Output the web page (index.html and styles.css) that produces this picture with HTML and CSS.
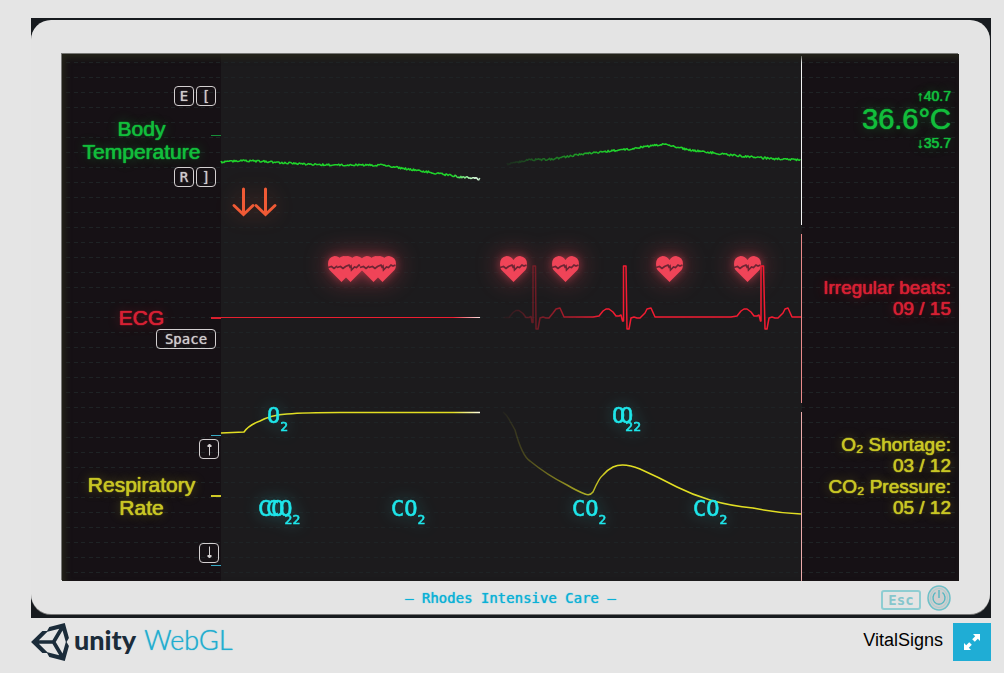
FILE: index.html
```html
<!DOCTYPE html>
<html lang="en">
<head>
<meta charset="utf-8">
<title>VitalSigns</title>
<link rel="stylesheet" href="styles.css">
</head>
<body>
<main class="game">
  <div class="monitor">
    <section class="screen">
      <div class="labels">
        <div class="channel temp">
          <div class="keys"><kbd>E</kbd><kbd>[</kbd></div>
          <h2>Body<br>Temperature</h2>
          <div class="keys"><kbd>R</kbd><kbd>]</kbd></div>
        </div>
        <div class="channel ecg">
          <h2>ECG</h2>
          <div class="keys"><kbd class="wide">Space</kbd></div>
        </div>
        <div class="channel resp">
          <div class="keys"><kbd><svg viewBox="0 0 18 18"><path d="M9.500 15.500V4M7.500 6.500h4M8.500 4.500h2M7.500 5.500h4" /></svg></kbd></div>
          <h2>Respiratory<br>Rate</h2>
          <div class="keys"><kbd><svg viewBox="0 0 18 18"><path d="M9.500 2.500V14M7.500 11.500h4M8.500 13.500h2M7.500 12.500h4" /></svg></kbd></div>
        </div>
      </div>

      <svg class="plot" viewBox="0 0 581 527" role="img" aria-label="Vital sign traces">
        <defs>
          <linearGradient id="gTemp" gradientUnits="userSpaceOnUse" x1="0" y1="0" x2="580" y2="0">
            <stop offset="0" stop-color="#1fd42b"/><stop offset=".4" stop-color="#1fd42b"/><stop offset=".44" stop-color="#e4ffe6"/>
            <stop offset=".48" stop-color="#1fd42b" stop-opacity="0"/><stop offset=".55" stop-color="#1fd42b" stop-opacity=".4"/><stop offset=".68" stop-color="#1fd42b"/>
          </linearGradient>
          <linearGradient id="gEcg" gradientUnits="userSpaceOnUse" x1="0" y1="0" x2="580" y2="0">
            <stop offset="0" stop-color="#e6202f"/><stop offset=".4" stop-color="#f01d30"/><stop offset=".446" stop-color="#ffe0e0"/>
            <stop offset=".48" stop-color="#f31b31" stop-opacity="0"/><stop offset=".54" stop-color="#f31b31" stop-opacity=".35"/><stop offset=".66" stop-color="#f31b31"/>
          </linearGradient>
          <linearGradient id="gResp" gradientUnits="userSpaceOnUse" x1="0" y1="0" x2="580" y2="0">
            <stop offset="0" stop-color="#e2de22"/><stop offset=".4" stop-color="#e2de22"/><stop offset=".446" stop-color="#fffde0"/>
            <stop offset=".48" stop-color="#e2de22" stop-opacity="0"/><stop offset=".55" stop-color="#e2de22" stop-opacity=".35"/><stop offset=".68" stop-color="#e2de22"/>
          </linearGradient>
          <symbol id="heart" viewBox="0 0 27 26" overflow="visible">
            <path fill="#f04458" d="M13.500 26L1.500 14Q0 12 0 8Q0 1 6.500 0Q11 0 13.500 4Q16 0 20 0Q27 1 27 8Q27 12 25.500 14Z"/>
            <path fill="none" stroke="#6d2533" stroke-width="1.700" d="M0 11.500L3.500 10.500L6 12.500L8.500 10.500L12 9L13 11L14 10L14.500 14L17.500 11L19.500 11.500L22 9L24 10L26.500 9"/>
          </symbol>
        </defs>

        <g class="ticks">
          <path stroke="#168d38" d="M-10 81.500H0"/>
          <path stroke="#d8202e" stroke-width="2" d="M-10 264H0"/>
          <path stroke="#37a9c4" d="M-10 381.500H0M-10 511.500H0"/>
          <path stroke="#cfc926" stroke-width="2" d="M-10 442H0"/>
        </g>

        <g class="hearts">
          <use href="#heart" x="107" y="202" width="27" height="26"/>
          <use href="#heart" x="116" y="202" width="27" height="26"/>
          <use href="#heart" x="139" y="202" width="27" height="26"/>
          <use href="#heart" x="148" y="202" width="27" height="26"/>
          <use href="#heart" x="279" y="202" width="27" height="26"/>
          <use href="#heart" x="331" y="202" width="27" height="26"/>
          <use href="#heart" x="435" y="202" width="27" height="26"/>
          <use href="#heart" x="513" y="202" width="27" height="26"/>
        </g>

        <g class="arrows">
          <path d="M22.500 135V160M13 151.500L22.500 160.500L32 151.500"/>
          <path d="M44.500 135V160M35 151.500L44.500 160.500L54 151.500"/>
        </g>

        <g class="trace">
          <path class="noisy" stroke="url(#gTemp)" stroke-width="1.500" d="M0 108L12 107L40 107L60 109L110 111L160 111L173 113L200 117L220 120L240 123L259 125"/>
          <path class="noisy" stroke="url(#gTemp)" stroke-width="1.500" d="M286 110L309 106L332 105L369 99L409 95L441 90L469 96L509 101L542 104L580 106"/>
          <path stroke="url(#gEcg)" d="M0 263.500H259V263.600"/>
          <path stroke="url(#gEcg)" stroke-width="1.500" d="M282 263.500H288l4 -5 3 -2h3l4 3 3 4h3l2 -1 1 6h1V212h2.500L315 275h2l2 -11 3 -1 3 1h3l4 -5 3 -4 4 -1 4 9H372l6 -1 4 -5 3 -2h3l4 3 3 4h3l2 -1 1.500 6h1V212h2.500L406 275h2l2 -11 3 -1 3 1h3l5 -5 2 -4 4 -1 4 9H510l6 -1 4 -5 3 -2h3l4 3 3 4h3l2 -1 1.500 6h.5V212h2.500L544 275h2l2 -11 3 -1 3 1h3l5 -5 2 -4 3 -1 4 9H580"/>
          <path stroke="url(#gResp)" stroke-width="1.500" d="M0 379L23 378Q28 371 39 367Q50 361 66 360Q84 358.500 119 358.500L259 358.400"/>
          <path stroke="url(#gResp)" stroke-width="1.500" d="M282 358Q286 361 289 367L294 376Q301 402 309 407Q326 421 346 431Q356 437 364 440Q369 442 372 438Q378 424 382 421Q386 416 392 413Q402 408 419 415Q437 423 456 433Q472 441 489 446Q510 452 532 454Q556 459 580 460"/>
        </g>

        <g class="gas">
          <text x="46" y="369">O<tspan dy="8">2</tspan></text>
          <text x="391" y="369">O<tspan dy="8">2</tspan></text>
          <text x="399" y="369">O<tspan dy="8">2</tspan></text>
          <text x="37" y="462">CO<tspan dy="8">2</tspan></text>
          <text x="45" y="462">CO<tspan dy="8">2</tspan></text>
          <text x="170" y="462">CO<tspan dy="8">2</tspan></text>
          <text x="351" y="462">CO<tspan dy="8">2</tspan></text>
          <text x="472" y="462">CO<tspan dy="8">2</tspan></text>
        </g>

        <g class="dividers">
          <path stroke="#f3f3f3" d="M580.500 2V171"/>
          <path stroke="#e98a8a" d="M580.500 180V349"/>
          <path stroke="#ecabab" d="M580.500 358V527"/>
        </g>
      </svg>

      <div class="readouts">
        <div class="channel temp"><small>↑40.7</small><strong>36.6°C</strong><small>↓35.7</small></div>
        <div class="channel ecg"><p>Irregular beats:</p><p>09 / 15</p></div>
        <div class="channel resp"><p>O₂ Shortage:</p><p>03 / 12</p><p>CO₂ Pressure:</p><p>05 / 12</p></div>
      </div>
    </section>

    <div class="bezel">
      <span class="brand">— Rhodes Intensive Care —</span>
      <div class="controls">
        <button class="esc" type="button">Esc</button>
        <button class="power" type="button" aria-label="Power">
          <svg viewBox="0 0 24 26"><ellipse cx="12" cy="13" rx="11" ry="12" fill="#cfcfcf" stroke="#6fc0c8" stroke-width="1.500"/><ellipse cx="12" cy="13" rx="8.500" ry="9.500" fill="none" stroke="#aacdd0"/><path fill="none" stroke="#55b7c2" stroke-width="1.400" d="M12 5V13M8.500 7.500A6 6.500 0 1 0 15.500 7.500"/></svg>
        </button>
      </div>
    </div>
  </div>
</main>

<footer class="footer">
  <div class="logo">
    <svg viewBox="15 14 484 484" aria-hidden="true"><path fill="#1b2c3a" d="M498.110 206.400L445.310 14.720 248.200 66.080 219 116.140l-59.200-.43L15.540 256l144.280 140.320 59.170-.43 29.240 50 197.080 51.360 52.800-191.620-30-49.630ZM223.770 124.200L374.550 86.510 288 232.330H114.870Zm0 263.630L114.870 279.710H288l86.550 145.810Zm193 14L330.170 256l86.580-145.840L458.560 256Z"/></svg>
    <span class="unity">unity</span>
    <span class="webgl">WebGL</span>
  </div>
  <div class="title">VitalSigns</div>
  <button class="fullscreen" type="button" aria-label="Fullscreen">
    <svg viewBox="0 0 38 38"><path fill="#fff" d="M20 11h7v7l-2.200-2.200-3 3-2.600-2.600 3-3ZM18 27h-7v-7l2.200 2.200 3-3 2.600 2.600-3 3Z"/></svg>
  </button>
</footer>
<script src="trace.js"></script>
</body>
</html>
```

FILE: styles.css
```css
* { box-sizing: border-box; }

body {
  margin: 0;
  padding: 18px 13px 0 31px;
  background: #e5e5e5;
  font-family: "Liberation Sans", Arial, sans-serif;
}

h2, p { margin: 0; font-weight: 400; }

button { padding: 0; font: inherit; cursor: pointer; }

.game {
  padding: 2px 1px 4px 0;
  background: #171b1f;
}

.monitor {
  padding: 34px 31px 0;
  border-radius: 20px;
  background: #e4e4e4;
  box-shadow: 0 1px 0 #777;
}

.screen {
  position: relative;
  display: grid;
  grid-template-columns: 159px 1fr 157px;
  background: linear-gradient(#1c1b1d, #1c1b1d) 159px 0 / calc(100% - 316px) 100% no-repeat #161115;
  box-shadow: -1px -1px 0 #777775;
}

/* faint dashed scan lines over the whole screen */
.screen::before {
  content: "";
  position: absolute;
  inset: 8px 4px 0 4px;
  background: repeating-linear-gradient(90deg, #1e2325 0 4px, transparent 4px 8px, #1e2325 8px 12px, transparent 12px 15px);
  -webkit-mask-image: repeating-linear-gradient(180deg, #000 0 1px, transparent 1px 15px);
  mask-image: repeating-linear-gradient(180deg, #000 0 1px, transparent 1px 15px);
}

/* vignette along the top and left edges */
.screen::after {
  content: "";
  position: absolute;
  inset: 0;
  z-index: 3;
  box-shadow: inset 3px 4px 6px #25251a;
  pointer-events: none;
}

.labels, .readouts {
  display: grid;
  grid-template-rows: repeat(3, 1fr);
  z-index: 2;
}

.temp { color: #12bd3b; text-shadow: 0 0 1px currentColor, 0 0 1px currentColor, 0 0 12px #14c53d66; }
.ecg { color: #d62033; text-shadow: 0 0 1px currentColor, 0 0 1px currentColor, 0 0 12px #dc223466; }
.resp { color: #c8c624; text-shadow: 0 0 1px currentColor, 0 0 1px currentColor, 0 0 12px #cdcb2566; }

.labels .temp { padding-top: 32px; }
.labels .ecg { padding-top: 76px; }
.labels .resp { padding-top: 34px; }

.labels h2 {
  font-size: 21px;
  line-height: 23px;
  text-align: center;
}

.labels .temp h2 { margin: 11px 0 4px; }
.labels .resp h2 { margin: 14px 0 24px; }

.keys {
  display: flex;
  justify-content: flex-end;
  gap: 2px;
  padding-right: 5px;
}

.resp .keys { padding-right: 2px; }

kbd {
  display: flex;
  align-items: center;
  justify-content: center;
  width: 20px;
  height: 20px;
  border: 1px solid #d3cfd0;
  border-radius: 4px;
  color: #cfcbcc;
  font: 14px "DejaVu Sans Mono", monospace;
  text-shadow: 0 0 1px #cfcbcc;
}

kbd.wide { width: 60px; }

kbd svg {
  width: 18px;
  height: 18px;
  fill: none;
  stroke: #d3cfd0;
}

.plot {
  position: relative;
  z-index: 1;
  display: block;
  width: 100%;
  height: auto;
  overflow: visible;
}

.hearts { filter: drop-shadow(0 0 4px #f0445877) drop-shadow(0 0 12px #f0445877); }

.arrows {
  fill: none;
  stroke: #f05a35;
  stroke-width: 3;
  stroke-linecap: round;
  filter: drop-shadow(0 0 10px #f05a3555);
}

.trace { fill: none; stroke-linejoin: round; }

.gas {
  fill: #1fe6ea;
  stroke: #1fe6ea;
  stroke-width: 0.600;
  font: 22px "DejaVu Sans Mono", monospace;
  filter: drop-shadow(0 0 8px #1fe6ea55);
}

.gas tspan { font-size: 13px; }

.readouts .channel {
  padding-right: 8px;
  font-size: 19px;
  line-height: 21px;
  text-align: right;
}

.readouts .temp { padding-top: 34px; }
.readouts .ecg { padding-top: 47px; }
.readouts .resp { padding-top: 29px; }

.readouts small, .readouts strong { display: block; font-weight: 400; }
.readouts small { font-size: 14px; line-height: 16px; }
.readouts strong { font-size: 29px; line-height: 31px; }

.bezel {
  display: grid;
  grid-template-columns: 1fr auto 1fr;
  align-items: center;
  height: 33px;
}

.brand {
  grid-column: 2;
  color: #0bb0d6;
  font: 14px/20px "DejaVu Sans Mono", monospace;
  text-shadow: 0 0 1px #0bb3d8;
}

.controls {
  display: flex;
  align-items: center;
  justify-content: flex-end;
  gap: 6px;
  padding-right: 8px;
}

.esc {
  width: 40px;
  height: 20px;
  margin-top: 4px;
  border: 2px solid #8fcdd2;
  border-radius: 3px;
  background: none;
  color: #86c6cc;
  font: bold 14px/16px "DejaVu Sans Mono", monospace;
}

.power {
  width: 24px;
  height: 26px;
  border: 0;
  background: none;
}

.power svg, .fullscreen svg { display: block; width: 100%; }

.footer {
  display: flex;
  align-items: center;
  padding-top: 5px;
}

.logo {
  display: flex;
  flex: 1;
  align-items: center;
}

.logo svg { width: 38px; height: 38px; }

.unity {
  margin-left: 5px;
  padding-bottom: 4px;
  color: #1b2c3a;
  font: 900 27px/34px Lato, sans-serif;
}

.webgl {
  margin-left: 8px;
  padding-bottom: 4px;
  color: #1fadd0;
  font: 300 27px/34px Lato, sans-serif;
  text-shadow: 0 0 1px #1fadd0;
}

.title {
  margin-right: 10px;
  padding-bottom: 4px;
  color: #000;
  font-size: 18px;
  line-height: 34px;
}

.fullscreen {
  width: 38px;
  height: 38px;
  border: 0;
  background: #1fadd5;
}
```

FILE: trace.js
```js
// Adds sensor noise to the temperature traces.
document.querySelectorAll(".noisy").forEach(function (path) {
  var length = path.getTotalLength();
  var points = [];
  var seed = 7;
  for (var d = 0; d <= length; d += 1) {
    seed = (seed * 1103 + 377) % 7919;
    var p = path.getPointAtLength(d);
    points.push(p.x.toFixed(1) + " " + (p.y + (seed / 7919 - 0.5) * 2).toFixed(1));
  }
  path.setAttribute("d", "M" + points.join("L"));
});
```
